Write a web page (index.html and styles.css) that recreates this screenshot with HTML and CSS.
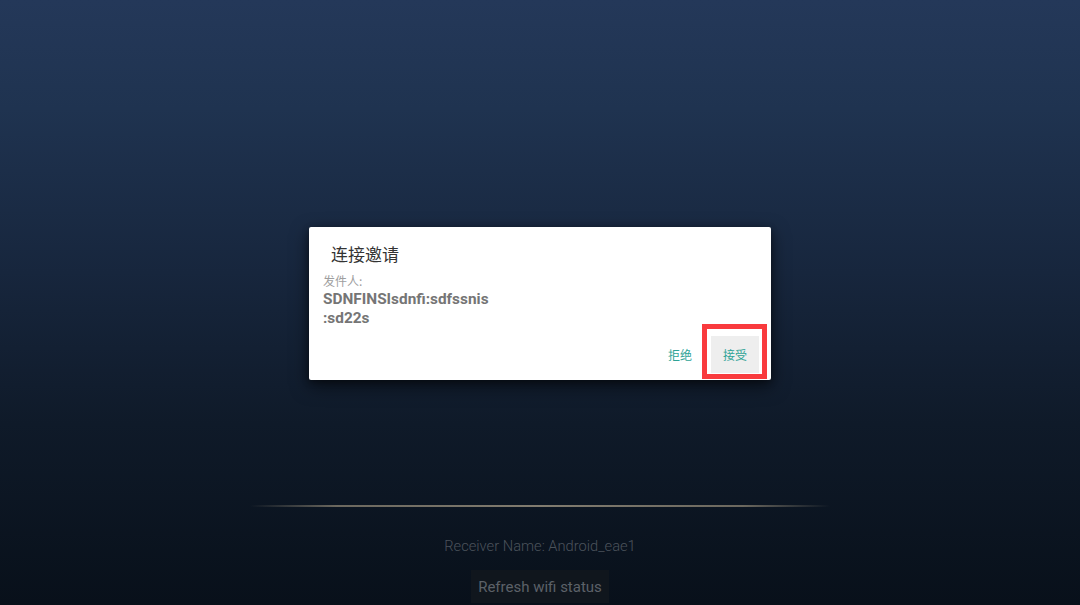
FILE: index.html
```html
<!DOCTYPE html>
<html lang="zh">
<head>
<meta charset="utf-8">
<title>连接邀请</title>
<link rel="stylesheet" href="styles.css">
</head>
<body>
<div class="screen">
  <div class="dialog">
    <div class="dialog-title">连接邀请</div>
    <div class="dialog-label">发件人:</div>
    <div class="dialog-sender">SDNFINSIsdnfi:sdfssnis<br>:sd22s</div>
    <div class="dialog-actions">
      <div class="btn btn-text">拒绝</div>
      <div class="btn btn-focus">接受</div>
    </div>
    <div class="highlight"></div>
  </div>
  <div class="divider"></div>
  <div class="receiver">Receiver Name: Android_eae1</div>
  <div class="refresh">Refresh wifi status</div>
</div>
</body>
</html>
```

FILE: styles.css
```css
html, body {
  margin: 0;
  padding: 0;
}
body {
  width: 1080px;
  height: 605px;
  overflow: hidden;
  font-family: "Roboto", "Noto Sans CJK SC", sans-serif;
}
.screen {
  box-sizing: border-box;
  width: 1080px;
  height: 605px;
  padding-top: 227px;
  display: flex;
  flex-direction: column;
  align-items: center;
  background: linear-gradient(180deg, #243859 0%, #1f3350 18%, #17263d 45%, #0f1a29 70%, #08101a 100%);
}
.dialog {
  position: relative;
  box-sizing: border-box;
  width: 462px;
  height: 153px;
  background: #ffffff;
  border-radius: 2px;
  box-shadow: 0 6px 18px rgba(0, 0, 0, 0.55), 0 2px 6px rgba(0, 0, 0, 0.35);
  padding: 15px 12px 7px 14px;
  display: flex;
  flex-direction: column;
}
.dialog-title {
  font-family: "Noto Sans CJK SC", "Roboto", sans-serif;
  font-size: 17px;
  line-height: 24px;
  color: #333333;
  padding-left: 8px;
}
.dialog-label {
  margin-top: 7px;
  font-family: "Noto Sans CJK SC", "Roboto", sans-serif;
  font-size: 12px;
  line-height: 16px;
  color: #9e9e9e;
}
.dialog-sender {
  margin-top: 1px;
  font-family: "Roboto", sans-serif;
  font-weight: bold;
  font-size: 15.4px;
  line-height: 19px;
  color: #757575;
}
.dialog-actions {
  margin-top: auto;
  display: flex;
  justify-content: flex-end;
  gap: 7px;
}
.btn {
  width: 48px;
  height: 37px;
  display: flex;
  align-items: center;
  justify-content: center;
  font-family: "Noto Sans CJK SC", "Roboto", sans-serif;
  font-size: 12px;
  color: #2ea396;
}
.btn-focus {
  background: #eeeeee;
}
.highlight {
  position: absolute;
  left: 393px;
  top: 97px;
  width: 65px;
  height: 55px;
  box-sizing: border-box;
  border: 5px solid #f93a3d;
}
.divider {
  margin-top: 125px;
  width: 580px;
  height: 2px;
  background: linear-gradient(90deg, rgba(140, 132, 115, 0) 0%, rgba(140, 132, 115, 0.75) 15%, rgba(150, 142, 125, 0.85) 50%, rgba(140, 132, 115, 0.75) 85%, rgba(140, 132, 115, 0) 100%);
}
.receiver {
  margin-top: 29px;
  font-size: 14.7px;
  line-height: 20px;
  font-weight: 300;
  color: #4b525b;
}
.refresh {
  margin-top: 14px;
  height: 33px;
  padding: 0 7px;
  display: flex;
  align-items: center;
  background: #10161d;
  font-size: 15px;
  color: #5c6168;
}
```
